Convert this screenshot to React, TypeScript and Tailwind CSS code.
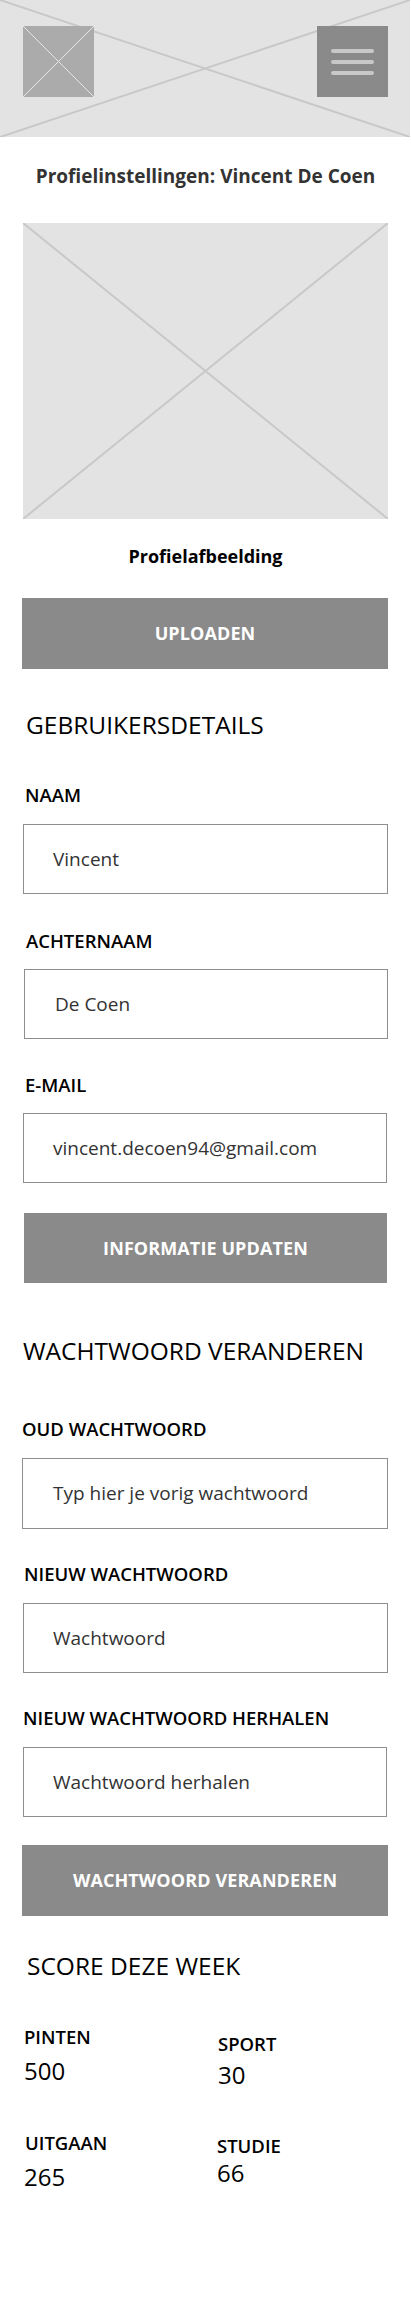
import React from "react";

const font = { fontFamily: '"Open Sans", "Noto Sans", sans-serif' };

function Cross({ stroke, width }: { stroke: string; width: number }) {
  return (
    <svg
      className="absolute inset-0 h-full w-full"
      viewBox="0 0 100 100"
      preserveAspectRatio="none"
    >
      <line x1="0" y1="0" x2="100" y2="100" stroke={stroke} strokeWidth={width} vectorEffect="non-scaling-stroke" />
      <line x1="100" y1="0" x2="0" y2="100" stroke={stroke} strokeWidth={width} vectorEffect="non-scaling-stroke" />
    </svg>
  );
}

function Label({ children, className }: { children: React.ReactNode; className: string }) {
  return (
    <div className={"text-[18.5px] leading-[24px] font-semibold text-black " + className}>{children}</div>
  );
}

function Field({ value, className }: { value: string; className: string }) {
  return (
    <div className={"flex h-[70px] items-center border border-[#8e8e8e] bg-white text-[19px] text-[#333333] " + className}>
      {value}
    </div>
  );
}

function Button({ children, className }: { children: React.ReactNode; className: string }) {
  return (
    <div className={"flex items-center justify-center bg-[#8a8a8a] text-[18px] font-bold tracking-[0.1px] text-white " + className}>
      {children}
    </div>
  );
}

export default function App() {
  return (
    <div className="min-h-[2312px] w-[411px] bg-white" style={font}>
      {/* Header */}
      <div className="relative flex h-[137px] w-[410px] items-start justify-between bg-[#e3e3e3]">
        <Cross stroke="#c8c8c8" width={2} />
        <div className="relative ml-[23px] mt-[26px] h-[71px] w-[71px] bg-[#ababab]">
          <Cross stroke="#e6e6e6" width={1} />
        </div>
        <div className="relative mr-[22px] mt-[26px] flex h-[71px] w-[71px] flex-col items-center justify-center gap-[7px] bg-[#8a8a8a]">
          <div className="h-[4px] w-[43px] rounded-full bg-[#c8c8c8]" />
          <div className="h-[4px] w-[43px] rounded-full bg-[#c8c8c8]" />
          <div className="h-[4px] w-[43px] rounded-full bg-[#c8c8c8]" />
        </div>
      </div>

      {/* Title */}
      <div className="mt-[25px] text-center text-[19px] leading-[28px] font-bold text-[#333333]">
        Profielinstellingen: Vincent De Coen
      </div>

      {/* Image placeholder */}
      <div className="relative ml-[23px] mt-[33px] h-[296px] w-[365px] bg-[#e3e3e3]">
        <Cross stroke="#c8c8c8" width={2} />
      </div>

      <div className="mt-[23px] text-center text-[18px] leading-[28px] font-bold text-black">
        Profielafbeelding
      </div>

      <Button className="ml-[22px] mt-[28px] h-[71px] w-[366px]">UPLOADEN</Button>

      {/* Gebruikersdetails */}
      <div className="ml-[26px] mt-[40px] text-[24.5px] leading-[32px] text-black">GEBRUIKERSDETAILS</div>

      <Label className="ml-[25px] mt-[42px]">NAAM</Label>
      <Field value="Vincent" className="ml-[23px] mt-[17px] w-[365px] pl-[29px]" />

      <Label className="ml-[26px] mt-[35px]">ACHTERNAAM</Label>
      <Field value="De Coen" className="ml-[24px] mt-[16px] w-[364px] pl-[30px]" />

      <Label className="ml-[25px] mt-[34px]">E-MAIL</Label>
      <Field value="vincent.decoen94@gmail.com" className="ml-[23px] mt-[16px] w-[364px] pl-[29px]" />

      <Button className="ml-[24px] mt-[30px] h-[70px] w-[363px]">INFORMATIE UPDATEN</Button>

      {/* Wachtwoord */}
      <div className="ml-[23px] mt-[52px] text-[24.5px] leading-[32px] text-black">WACHTWOORD VERANDEREN</div>

      <Label className="ml-[22px] mt-[50px]">OUD WACHTWOORD</Label>
      <Field value="Typ hier je vorig wachtwoord" className="ml-[22px] mt-[17px] h-[71px] w-[366px] pl-[30px]" />

      <Label className="ml-[24px] mt-[33px]">NIEUW WACHTWOORD</Label>
      <Field value="Wachtwoord" className="ml-[23px] mt-[17px] w-[365px] pl-[29px]" />

      <Label className="ml-[23px] mt-[33px]">NIEUW WACHTWOORD HERHALEN</Label>
      <Field value="Wachtwoord herhalen" className="ml-[23px] mt-[17px] w-[364px] pl-[29px]" />

      <Button className="ml-[22px] mt-[28px] h-[71px] w-[366px]">WACHTWOORD VERANDEREN</Button>

      {/* Score */}
      <div className="ml-[27px] mt-[34px] text-[24.5px] leading-[32px] text-black">SCORE DEZE WEEK</div>

      <div className="grid grid-cols-[194px_1fr] pl-[24px]">
        <div className="flex flex-col">
          <Label className="mt-[43px]">PINTEN</Label>
          <div className="mt-[7px] text-[24px] leading-[30px] text-black">500</div>
          <Label className="ml-[1px] mt-[45px]">UITGAAN</Label>
          <div className="mt-[7px] text-[24px] leading-[30px] text-black">265</div>
        </div>
        <div className="flex flex-col">
          <Label className="mt-[50px]">SPORT</Label>
          <div className="mt-[4px] text-[24px] leading-[30px] text-black">30</div>
          <Label className="-ml-[1px] mt-[44px]">STUDIE</Label>
          <div className="-ml-[1px] mt-0 text-[24px] leading-[30px] text-black">66</div>
        </div>
      </div>
    </div>
  );
}
